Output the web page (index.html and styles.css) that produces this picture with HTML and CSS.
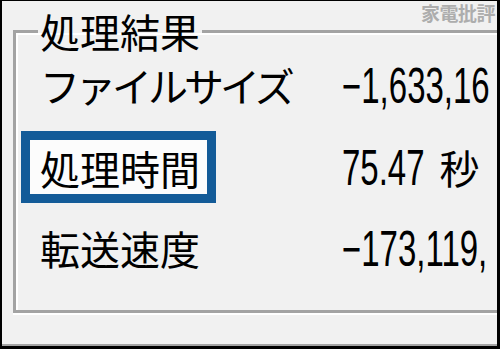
FILE: index.html
```html
<!DOCTYPE html>
<html lang="ja">
<head>
<meta charset="utf-8">
<link rel="stylesheet" href="styles.css">
</head>
<body>
<div class="frame">
  <fieldset class="group">
    <legend class="group-title">処理結果</legend>
    <div class="rows">
      <div class="label kana">ファイルサイズ</div>
      <div class="value"><span class="num">−1,633,16</span></div>
      <div class="label boxed">処理時間</div>
      <div class="value"><span class="num">75.47</span><span class="unit">秒</span></div>
      <div class="label">転送速度</div>
      <div class="value"><span class="num">−173,119,</span></div>
    </div>
  </fieldset>
  <div class="watermark">家電批評</div>
</div>
</body>
</html>
```
FILE: styles.css
```css
html, body {
  margin: 0;
  padding: 0;
  background: #000;
}
.frame {
  position: relative;
  width: 500px;
  height: 349px;
  box-sizing: border-box;
  border-style: solid;
  border-color: #000;
  border-width: 1px 3px 3px 2px;
  background: #f1f1f1;
  box-shadow: inset 0 -2px 0 #a4a4a4;
  overflow: hidden;
  font-family: "Noto Sans CJK JP", sans-serif;
  color: #000;
}
.group {
  margin: 10px -30px 0 11px;
  min-width: 0;
  border: 3px solid #a3a3a3;
  padding: 13px 0 41px 5px;
  box-shadow: inset 2px 2px 0 #fff, 0 2px 0 #fff;
}
.group-title {
  margin-left: 17px;
  padding: 0 2px;
  font-size: 40px;
  line-height: 41px;
}
.rows {
  display: grid;
  grid-template-columns: 321px 1fr;
  row-gap: 25px;
  align-items: center;
}
.label {
  font-size: 40px;
  line-height: 41px;
  padding-left: 19px;
  white-space: nowrap;
}
.kana {
  letter-spacing: -4px;
}
.boxed {
  width: 195px;
  box-sizing: border-box;
  border: 9px solid #135b98;
  background: #fcfcfc;
  padding: 8px 0 5px 10px;
}
.value {
  display: flex;
  align-items: center;
  white-space: nowrap;
}
.num {
  display: inline-block;
  font-family: "Liberation Sans", sans-serif;
  font-size: 33px;
  line-height: 33px;
  transform: scaleY(1.5);
}
.unit {
  font-size: 40px;
  line-height: 41px;
  margin-left: 15px;
}
.watermark {
  position: absolute;
  top: 1px;
  right: 2px;
  font-size: 19px;
  line-height: 22px;
  font-weight: 700;
  color: #adadad;
  letter-spacing: -0.5px;
}
```
